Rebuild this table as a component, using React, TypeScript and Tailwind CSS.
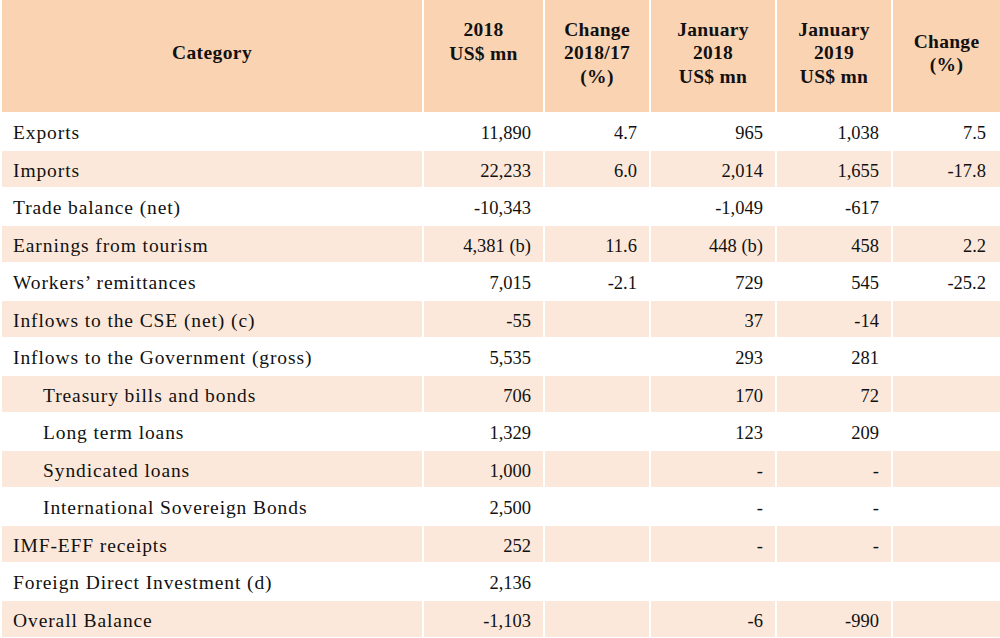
const rows: { label: string; indent?: boolean; v: string[] }[] = [
  { label: "Exports", v: ["11,890", "4.7", "965", "1,038", "7.5"] },
  { label: "Imports", v: ["22,233", "6.0", "2,014", "1,655", "-17.8"] },
  { label: "Trade balance (net)", v: ["-10,343", "", "-1,049", "-617", ""] },
  { label: "Earnings from tourism", v: ["4,381 (b)", "11.6", "448 (b)", "458", "2.2"] },
  { label: "Workers\u2019 remittances", v: ["7,015", "-2.1", "729", "545", "-25.2"] },
  { label: "Inflows to the CSE (net) (c)", v: ["-55", "", "37", "-14", ""] },
  { label: "Inflows to the Government (gross)", v: ["5,535", "", "293", "281", ""] },
  { label: "Treasury bills and bonds", indent: true, v: ["706", "", "170", "72", ""] },
  { label: "Long term loans", indent: true, v: ["1,329", "", "123", "209", ""] },
  { label: "Syndicated loans", indent: true, v: ["1,000", "", "-", "-", ""] },
  { label: "International Sovereign Bonds", indent: true, v: ["2,500", "", "-", "-", ""] },
  { label: "IMF-EFF receipts", v: ["252", "", "-", "-", ""] },
  { label: "Foreign Direct Investment (d)", v: ["2,136", "", "", "", ""] },
  { label: "Overall Balance", v: ["-1,103", "", "-6", "-990", ""] },
];

const App = () => {
  return (
    <div
      className="w-[1000px] h-[638px] bg-white text-[#111] overflow-hidden"
      style={{ fontFamily: '"Liberation Serif", "DejaVu Serif", serif' }}
    >
      <div className="grid grid-cols-[420px_119px_104px_124px_114px_1fr] gap-x-[2px] gap-y-[1px] pl-[2px] text-[19.5px]">
        {/* header */}
        <div className="bg-[#fad3b3] h-[112px] flex items-center justify-center font-bold pb-[6px] tracking-[0.4px]">
          Category
        </div>
        <div className="bg-[#fad3b3] h-[112px] flex flex-col items-center pt-[18px] font-bold leading-[23.5px] text-center tracking-[0.3px]">
          <span>2018</span>
          <span>US$ mn</span>
        </div>
        <div className="bg-[#fad3b3] h-[112px] flex flex-col items-center justify-center pb-[6px] font-bold leading-[23.5px] text-center tracking-[0.3px]">
          <span>Change</span>
          <span>2018/17</span>
          <span>(%)</span>
        </div>
        <div className="bg-[#fad3b3] h-[112px] flex flex-col items-center justify-center pb-[6px] font-bold leading-[23.5px] text-center tracking-[0.3px]">
          <span>January</span>
          <span>2018</span>
          <span>US$ mn</span>
        </div>
        <div className="bg-[#fad3b3] h-[112px] flex flex-col items-center justify-center pb-[6px] font-bold leading-[23.5px] text-center tracking-[0.3px]">
          <span>January</span>
          <span>2019</span>
          <span>US$ mn</span>
        </div>
        <div className="bg-[#fad3b3] h-[112px] flex flex-col items-center justify-center pb-[6px] font-bold leading-[23.5px] text-center tracking-[0.3px]">
          <span>Change</span>
          <span>(%)</span>
        </div>

        {rows.map((r, i) => {
          const bg = i % 2 === 1 ? "bg-[#fce8da]" : "bg-white";
          return [
            <div
              key={r.label}
              className={`${bg} h-[36.5px] flex items-center pt-[3px] tracking-[0.9px] ${r.indent ? "pl-[41px]" : "pl-[11px]"}`}
            >
              {r.label}
            </div>,
            ...r.v.map((val, j) => (
              <div
                key={r.label + j}
                className={`${bg} h-[36.5px] flex items-center justify-end pt-[6px] text-[18.5px] ${j === 4 ? "pr-[14px]" : "pr-[12px]"}`}
              >
                {val}
              </div>
            )),
          ];
        })}
      </div>
    </div>
  );
};

export default App;
